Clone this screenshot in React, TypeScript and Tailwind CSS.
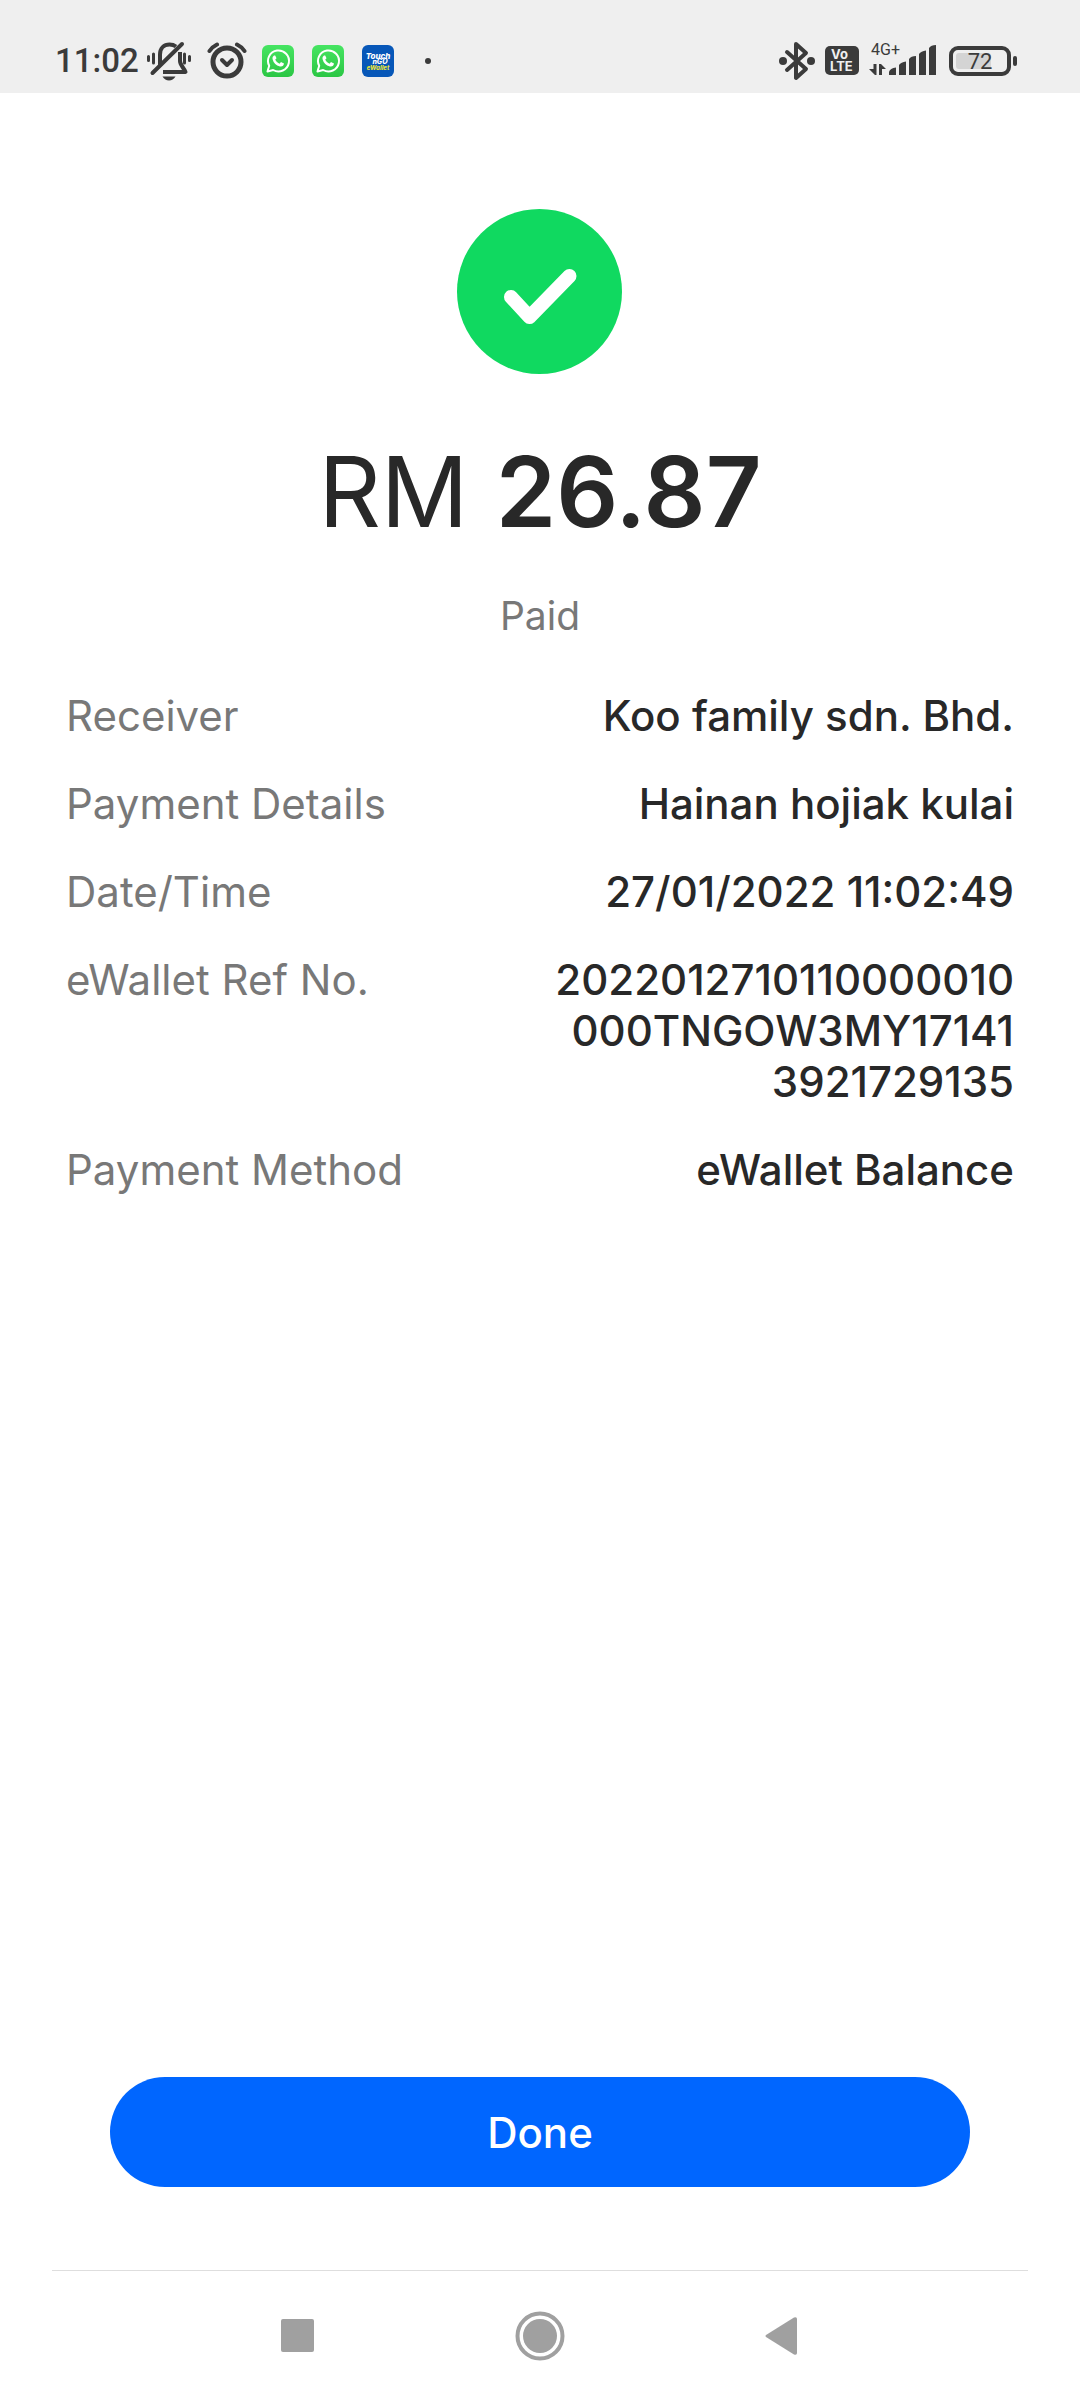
import React from "react";

const DARK = "#3b3b3b";

function MutedBell() {
  return (
    <svg width="46" height="40" viewBox="0 0 46 40" fill="none" stroke={DARK} aria-label="Vibrate mode">
      <path d="M14 25V13.500C14 7 18 3.500 23.500 3.500C26 3.500 28 4 30 5.500" strokeWidth="4" />
      <path d="M34 11V20C34 24 38 27 39.500 31H17" strokeWidth="4" strokeLinejoin="round" />
      <path d="M6.500 32L36 3" strokeWidth="4" strokeLinecap="round" />
      <path d="M16.500 35.500H29.500Q27 39.500 23 39.500T16.500 35.500Z" fill={DARK} stroke="none" />
      <path d="M2.500 15.500V19.500M7.500 13V22M38.500 13V22M43.500 15.500V19.500" strokeWidth="3" strokeLinecap="round" />
    </svg>
  );
}

function AlarmClock() {
  return (
    <svg width="40" height="38" viewBox="0 0 40 38" fill="none" stroke={DARK} strokeLinecap="round" strokeLinejoin="round" aria-label="Alarm set">
      <circle cx="20" cy="20" r="14" strokeWidth="5" />
      <path d="M15 18L20 23L25 18" strokeWidth="4" />
      <path d="M2.500 9Q5 5 10 2.500M30 2.500Q35 5 37.500 9" strokeWidth="4" />
    </svg>
  );
}

function WhatsApp() {
  return (
    <svg width="32" height="32" viewBox="0 0 32 32" fill="none" aria-label="WhatsApp">
      <defs>
        <linearGradient id="wa" x1="0" y1="0" x2="0" y2="1">
          <stop offset="0" stopColor="#46e562" />
          <stop offset="1" stopColor="#2bc644" />
        </linearGradient>
      </defs>
      <rect width="32" height="32" rx="6" fill="url(#wa)" />
      <path d="M5.500 26.500L7.200 20.800A10.500 10.500 0 1 1 11.200 25Z" stroke="#fff" strokeWidth="2" strokeLinejoin="round" />
      <path d="M12 10.500Q10 11.500 10.500 14Q12 20 18 21.500Q21.500 22 22 18.500L19 17L17.500 18.700Q14.500 17.500 13.200 14.800L14.500 13.200L13.200 10.500Z" fill="#fff" />
    </svg>
  );
}

function TouchNGo() {
  return (
    <svg width="32" height="32" viewBox="0 0 32 32" aria-label="Touch n Go eWallet">
      <rect width="32" height="32" rx="6" fill="#0757b8" />
      <g fontFamily="Inter, sans-serif" fontWeight="800" fontStyle="italic" textAnchor="middle">
        <text x="16" y="14" fontSize="8" fill="#fff">Touch</text>
        <text x="18" y="19" fontSize="7" fill="#fff">nGO</text>
        <text x="16" y="25" fontSize="6" fill="#e8e337">eWallet</text>
      </g>
    </svg>
  );
}

function Bluetooth() {
  return (
    <svg width="36" height="40" viewBox="0 0 36 40" fill="none" stroke={DARK} aria-label="Bluetooth connected">
      <path d="M8 11L27 28L17 37V3L27 12L8 29" strokeWidth="4" strokeLinecap="round" strokeLinejoin="round" />
      <circle cx="4" cy="20" r="4" fill={DARK} stroke="none" />
      <circle cx="32" cy="20" r="4" fill={DARK} stroke="none" />
    </svg>
  );
}

function VoLte() {
  return (
    <svg width="34" height="29" viewBox="0 0 34 29" aria-label="VoLTE">
      <rect width="34" height="29" rx="5" fill={DARK} />
      <g fontFamily="Inter, sans-serif" fontWeight="700" fill="#f0f0f0">
        <text x="6" y="13" fontSize="13">Vo</text>
        <text x="5" y="25" fontSize="13">LTE</text>
      </g>
    </svg>
  );
}

function Signal() {
  return (
    <svg width="70" height="45" viewBox="0 -4 70 45" fill={DARK} aria-label="4G+ signal">
      <text x="2" y="13" fontFamily="Roboto, sans-serif" fontSize="16">4G+</text>
      <path d="M0 27H4.500V22H7.500V33H6ZM10 22H12L17 27H13V33H10Z" />
      <path d="M20 33V30Q21 26 27 25.500V33ZM30 33V23Q32 20 37 19.500V33ZM40 33V17Q42 14 47 14V33ZM50 33V12Q52 9 57 8.500V33ZM60 33V6Q62 3 67 3V33Z" />
    </svg>
  );
}

function Battery() {
  return (
    <svg width="68" height="30" viewBox="0 0 68 30" fill="none" aria-label="Battery 72 percent">
      <rect x="2" y="2" width="58" height="26" rx="7" stroke={DARK} strokeWidth="4" />
      <rect x="7" y="7" width="35" height="16" rx="3" fill="#d4d4d4" />
      <rect x="64" y="10" width="4" height="10" rx="2" fill={DARK} />
      <text x="31" y="23" textAnchor="middle" fontFamily="Roboto, sans-serif" fontSize="22" fill={DARK}>72</text>
    </svg>
  );
}

const details = [
  ["Receiver", "Koo family sdn. Bhd."],
  ["Payment Details", "Hainan hojiak kulai"],
  ["Date/Time", "27/01/2022 11:02:49"],
  ["eWallet Ref No.", "2022012710110000010000TNGOW3MY171413921729135"],
  ["Payment Method", "eWallet Balance"],
];

export default function App() {
  return (
    <div className="flex min-h-screen flex-col bg-white font-[Inter,sans-serif] text-[#282828]">
      <header className="flex h-[93px] items-center justify-between bg-[#efefef] pt-7 pr-[63px] pl-[55px] text-[#3b3b3b]">
        <div className="flex items-center">
          <time className="font-[Roboto,sans-serif] text-[33px] leading-10 font-medium">11:02</time>
          <div className="ml-[7px] flex items-center gap-[15px]">
            <MutedBell />
            <AlarmClock />
            <div className="flex items-center gap-[18px]">
              <WhatsApp />
              <WhatsApp />
              <TouchNGo />
            </div>
          </div>
          <span className="ml-[31px] size-[6px] rounded-full bg-[#3b3b3b]" />
        </div>
        <div className="flex items-center gap-[10px]">
          <Bluetooth />
          <VoLte />
          <Signal />
          <Battery />
        </div>
      </header>

      <main className="flex flex-1 flex-col items-center pt-[116px]">
        <svg width="166" height="165" viewBox="0 0 166 165" fill="none" aria-label="Success">
          <circle cx="82.500" cy="82.500" r="82.500" fill="#10d960" />
          <path d="M54 88L72.500 108L112.500 67" stroke="#fff" strokeWidth="14" strokeLinecap="round" strokeLinejoin="round" />
        </svg>
        <h1 className="mt-[58px] text-[97px] leading-[120px] font-normal">
          RM <strong className="font-semibold">26.87</strong>
        </h1>
        <p className="mt-[40px] text-[39px] leading-[48px] text-[#787878]">Paid</p>

        <dl className="mt-[50px] flex w-full flex-col gap-[37px] px-[66px] text-[42px] leading-[51px]">
          {details.map(([label, value]) => (
            <div key={label} className="flex justify-between">
              <dt className="text-[#787878]">{label}</dt>
              <dd className="max-w-[464px] text-right font-medium break-all">{value}</dd>
            </div>
          ))}
        </dl>

        <div className="mt-auto w-full px-[110px] pb-[83px]">
          <button type="button" className="h-[110px] w-full rounded-full bg-[#0066ff] text-[42px] font-medium text-white">
            Done
          </button>
        </div>
      </main>

      <nav className="mx-[52px] flex h-[130px] items-center justify-center border-t border-[#dedede]">
        <button type="button" aria-label="Recent apps" className="flex w-[243px] justify-center">
          <svg width="33" height="33" viewBox="0 0 33 33" fill="#a0a0a0"><rect width="33" height="33" rx="2" /></svg>
        </button>
        <button type="button" aria-label="Home" className="flex w-[243px] justify-center">
          <svg width="50" height="50" viewBox="0 0 50 50" fill="none" stroke="#a0a0a0">
            <circle cx="25" cy="25" r="22.500" strokeWidth="4" />
            <circle cx="25" cy="25" r="17" fill="#a0a0a0" stroke="none" />
          </svg>
        </button>
        <button type="button" aria-label="Back" className="flex w-[243px] justify-center">
          <svg width="36" height="38" viewBox="0 0 36 38" fill="#a0a0a0"><path d="M1 18Q0 19 1 20L29 37.500Q32 38.500 32 36V2Q32 -0.500 29 0.500Z" /></svg>
        </button>
      </nav>
    </div>
  );
}
